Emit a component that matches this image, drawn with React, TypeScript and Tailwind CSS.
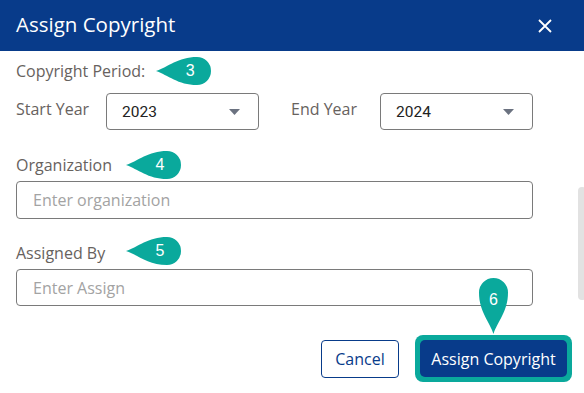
import React from "react";

function LeftDrop({ n }: { n: string }) {
  return (
    <div className="relative w-[56px] h-[28px]">
      <svg width="56" height="28" viewBox="0 0 56 28" className="absolute inset-0">
        <path d="M0 14 C 12 10, 22 0, 41 0 A 14 14 0 0 1 41 28 C 22 28, 12 18, 0 14 Z" fill="#0aa99c" />
      </svg>
      <span className="absolute left-[29px] top-[4px] w-[10px] text-center text-white text-[16px] leading-[20px] font-['Liberation_Sans',Arial,sans-serif]">
        {n}
      </span>
    </div>
  );
}

function Caret() {
  return (
    <svg width="11" height="6" viewBox="0 0 11 6">
      <path d="M0 0 L11 0 L5.5 6 Z" fill="#6b7280" />
    </svg>
  );
}

function YearSelect({ value }: { value: string }) {
  return (
    <div className="w-[153px] h-[37px] border border-[#7a7a7a] rounded-[4px] flex items-center justify-between pl-[15px] pr-[18px]">
      <span className="text-[15.5px] text-[#222] font-['Roboto',sans-serif] pt-[3px]">{value}</span>
      <Caret />
    </div>
  );
}

export default function App() {
  return (
    <div className="relative w-[584px] h-[393px] bg-white overflow-hidden font-['Open_Sans',sans-serif]">
      <div className="h-[51px] bg-[#083b8a] flex items-center justify-between pl-[16px] pr-[32px]">
        <h1 className="text-white text-[20.5px] leading-none pb-[2px]">Assign Copyright</h1>
        <svg width="14" height="14" viewBox="0 0 14 14">
          <path d="M1 1 L13 13 M13 1 L1 13" stroke="white" strokeWidth="1.8" />
        </svg>
      </div>

      <div className="pl-[16px] pr-[51px] flex flex-col">
        <div className="mt-[6px] h-[28px] flex items-center">
          <span className="text-[16px] text-[#67625e]">Copyright Period:</span>
          <div className="ml-[11px]">
            <LeftDrop n="3" />
          </div>
        </div>

        <div className="mt-[8px] flex items-center">
          <span className="w-[90px] text-[16px] text-[#67625e] pb-[5px]">Start Year</span>
          <YearSelect value="2023" />
          <span className="ml-[32px] w-[89px] text-[16px] text-[#67625e] pb-[5px]">End Year</span>
          <YearSelect value="2024" />
        </div>

        <div className="mt-[21px] h-[28px] flex items-center">
          <span className="w-[110px] text-[16px] text-[#67625e]">Organization</span>
          <LeftDrop n="4" />
        </div>
        <div className="mt-[2px] h-[38px] border border-[#7a7a7a] rounded-[4px] flex items-center pl-[16px]">
          <span className="text-[16px] text-[#a3a3a3]">Enter organization</span>
        </div>

        <div className="mt-[18px] h-[28px] flex items-center">
          <span className="w-[110px] text-[16px] text-[#67625e] pt-[3px]">Assigned By</span>
          <LeftDrop n="5" />
        </div>
        <div className="mt-[4px] h-[37px] border border-[#7a7a7a] rounded-[4px] flex items-center pl-[16px]">
          <span className="text-[16px] text-[#a3a3a3]">Enter Assign</span>
        </div>
      </div>

      <div className="mt-[29px] flex items-center justify-end pr-[12px] gap-[16px]">
        <button className="w-[78px] h-[38px] border border-[#083b8a] rounded-[4px] text-[16px] text-[#083b8a] bg-white">
          Cancel
        </button>
        <div className="w-[157px] h-[47px] bg-[#0aa99c] rounded-[8px] p-[5px]">
          <button className="w-full h-full bg-[#083b8a] rounded-[5px] text-white text-[16px]">
            Assign Copyright
          </button>
        </div>
      </div>

      <div className="absolute left-[479px] top-[278px] w-[29px] h-[56px]">
        <svg width="29" height="56" viewBox="0 0 29 56" className="absolute inset-0">
          <path d="M14.5 56 C 11 44, 0 34, 0 14.5 A 14.5 14.5 0 0 1 29 14.5 C 29 34, 18 44, 14.5 56 Z" fill="#0aa99c" />
        </svg>
        <span className="absolute left-0 top-[12px] w-[29px] text-center text-white text-[16px] leading-[20px] font-['Liberation_Sans',Arial,sans-serif]">
          6
        </span>
      </div>

      <div className="absolute left-[578px] top-[187px] w-[8px] h-[113px] bg-[#e2e2e2] rounded-[4px]" />
    </div>
  );
}
